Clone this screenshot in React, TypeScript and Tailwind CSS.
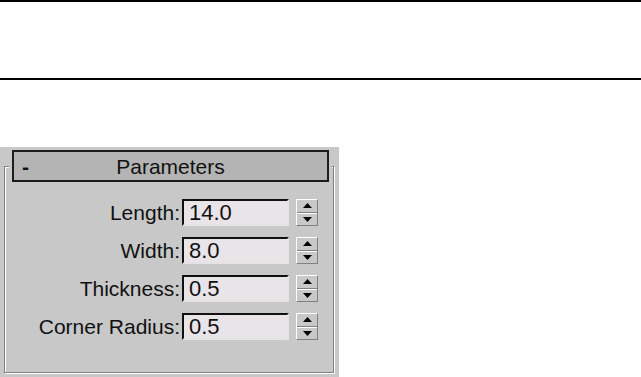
const rows = [
  { label: 'Length:', value: '14.0' },
  { label: 'Width:', value: '8.0' },
  { label: 'Thickness:', value: '0.5' },
  { label: 'Corner Radius:', value: '0.5' },
]

function Spinner() {
  return (
    <div className="flex h-[27px] w-[22px] flex-col border border-t-white border-l-white border-r-[#808080] border-b-[#808080] bg-[#c8c8c8]">
      <div className="flex flex-1 items-center justify-center border-b border-b-[#808080]">
        <svg width="9" height="5" viewBox="0 0 9 5">
          <path d="M4.5 0 L9 5 L0 5 Z" fill="#000" />
        </svg>
      </div>
      <div className="flex flex-1 items-center justify-center border-t border-t-white">
        <svg width="9" height="5" viewBox="0 0 9 5">
          <path d="M0 0 L9 0 L4.5 5 Z" fill="#000" />
        </svg>
      </div>
    </div>
  )
}

function Row({ label, value }: { label: string; value: string }) {
  return (
    <div className="flex h-[27px] items-center">
      <div className="w-[175px] text-right leading-none">{label}</div>
      <div className="ml-[2px] flex h-[27px] w-[107px] items-center border-2 border-t-[#111] border-l-[#111] border-r-[#e4e4e4] border-b-[#e4e4e4] bg-[#e8e4e8] pl-[5px] text-[22px] leading-none">
        {value}
      </div>
      <div className="ml-[7px]">
        <Spinner />
      </div>
    </div>
  )
}

export default function App() {
  return (
    <div className="flex h-[377px] w-[641px] flex-col overflow-hidden bg-white font-['Liberation_Sans',Arial,sans-serif] text-[21px] text-[#111]">
      <div className="h-[2px] bg-black" />
      <div className="h-[76px]" />
      <div className="h-[2px] bg-black" />
      <div className="h-[67px]" />
      <div className="h-[230px] w-[339px] bg-[#c8c8c8] pl-[4px] pt-[19px]">
        <div className="flex h-[207px] w-[330px] flex-col border border-[#808080] shadow-[1px_1px_0_#fff,inset_1px_1px_0_#fff]">
          <div className="-mt-[17px] ml-[4px] w-[323px] bg-[#c8c8c8] px-[3px]">
            <div className="flex h-[32px] items-center border-2 border-[#1c1c1c] bg-[#b4b4b4] leading-none">
              <div className="w-[40px] pl-[8px] font-bold">-</div>
              <div className="flex-1 text-center">Parameters</div>
              <div className="w-[40px]" />
            </div>
          </div>
          <div className="mt-[17px] flex flex-col gap-[11px]">
            {rows.map((r) => (
              <Row key={r.label} label={r.label} value={r.value} />
            ))}
          </div>
        </div>
      </div>
    </div>
  )
}
